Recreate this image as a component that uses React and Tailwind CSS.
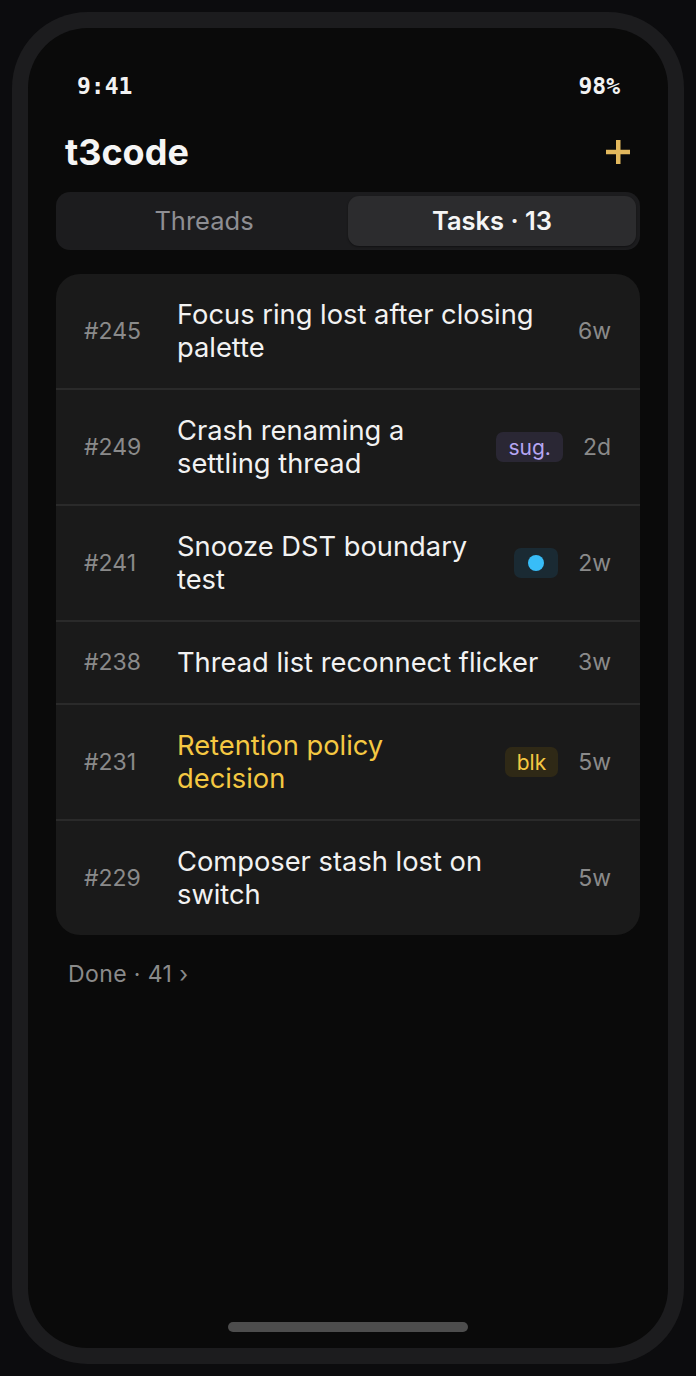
import React from "react";

const rows = [
  { id: "#245", title: "Focus ring lost after closing palette", time: "6w" },
  { id: "#249", title: "Crash renaming a settling thread", time: "2d", badge: "sug" },
  { id: "#241", title: "Snooze DST boundary test", time: "2w", badge: "dot" },
  { id: "#238", title: "Thread list reconnect flicker", time: "3w" },
  { id: "#231", title: "Retention policy decision", time: "5w", badge: "blk", warn: true },
  { id: "#229", title: "Composer stash lost on switch", time: "5w" },
];

function Badge({ type }) {
  if (type === "sug")
    return (
      <span className="flex h-[30px] items-center rounded-[7px] bg-[#2a2734] px-[12px] text-[21px] leading-none text-[#b6a6f2]">
        sug.
      </span>
    );
  if (type === "dot")
    return (
      <span className="flex h-[30px] w-[44px] items-center justify-center rounded-[7px] bg-[#1a2a33]">
        <span className="h-[16px] w-[16px] rounded-full bg-[#38bdf8]" />
      </span>
    );
  if (type === "blk")
    return (
      <span className="flex h-[30px] items-center rounded-[7px] bg-[#2f2916] px-[12px] text-[21px] leading-none text-[#f5c842]">
        blk
      </span>
    );
  return null;
}

export default function App() {
  return (
    <div className="min-h-screen bg-[#0c0c0e] p-3 font-['Inter',sans-serif]">
      <div className="h-[1352px] rounded-[76px] bg-[#1c1c1e] p-4">
        <div className="flex h-full flex-col rounded-[60px] bg-[#0a0a0a] px-7">
          {/* status bar */}
          <div className="mt-[44px] flex h-[28px] items-center justify-between pl-[21px] pr-[20px] font-['DejaVu_Sans_Mono',monospace] text-[23px] font-bold leading-[28px] text-[#f2f2f2]">
            <span>9:41</span>
            <span>98%</span>
          </div>

          {/* title row */}
          <div className="mt-[32px] flex h-[40px] items-center justify-between pl-[9px] pr-[10px]">
            <h1 className="text-[36px] font-bold leading-none text-[#f5f5f5]">t3code</h1>
            <svg width="24" height="24" viewBox="0 0 24 24" aria-hidden="true">
              <rect x="10" y="0" width="4.5" height="24" fill="#e2b85d" />
              <rect x="0" y="9.75" width="24" height="4.5" fill="#e2b85d" />
            </svg>
          </div>

          {/* segmented control */}
          <div className="mt-[20px] flex h-[58px] rounded-[14px] bg-[#1c1c1e] p-1">
            <div className="flex flex-1 items-center justify-center text-[25.5px] text-[#8e8e93]">Threads</div>
            <div className="flex flex-1 items-center justify-center rounded-[11px] bg-[#2c2c2e] text-[25.5px] font-semibold text-[#f5f5f5] shadow-[0_1px_2px_rgba(0,0,0,0.4)]">
              Tasks · 13
            </div>
          </div>

          {/* card */}
          <div className="mt-[24px] overflow-hidden rounded-[24px] bg-[#1a1a1a]">
            {rows.map((r, i) => (
              <div
                key={r.id}
                className={
                  "flex items-center gap-5 py-6 pl-7 pr-[29px] " +
                  (i > 0 ? "border-t-2 border-[#2a2a2a]" : "")
                }
              >
                <span className="w-[73px] shrink-0 text-[23px] leading-[33px] text-[#8a8a8a]">{r.id}</span>
                <span
                  className={
                    "min-w-0 flex-1 text-[27.3px] leading-[33px] " +
                    (r.warn ? "text-[#f5c842]" : "text-[#f2f2f2]")
                  }
                >
                  {r.title}
                </span>
                {r.badge && <Badge type={r.badge} />}
                <span className="shrink-0 text-[23px] leading-[33px] text-[#8a8a8a]">{r.time}</span>
              </div>
            ))}
          </div>

          <div className="mt-6 pl-3 text-[23px] leading-[30px] tracking-[0.4px] text-[#8a8a8a]">Done · 41 ›</div>

          <div className="mb-4 mt-auto h-[10px] w-[240px] self-center rounded-full bg-[#4d4d4d]" />
        </div>
      </div>
    </div>
  );
}
